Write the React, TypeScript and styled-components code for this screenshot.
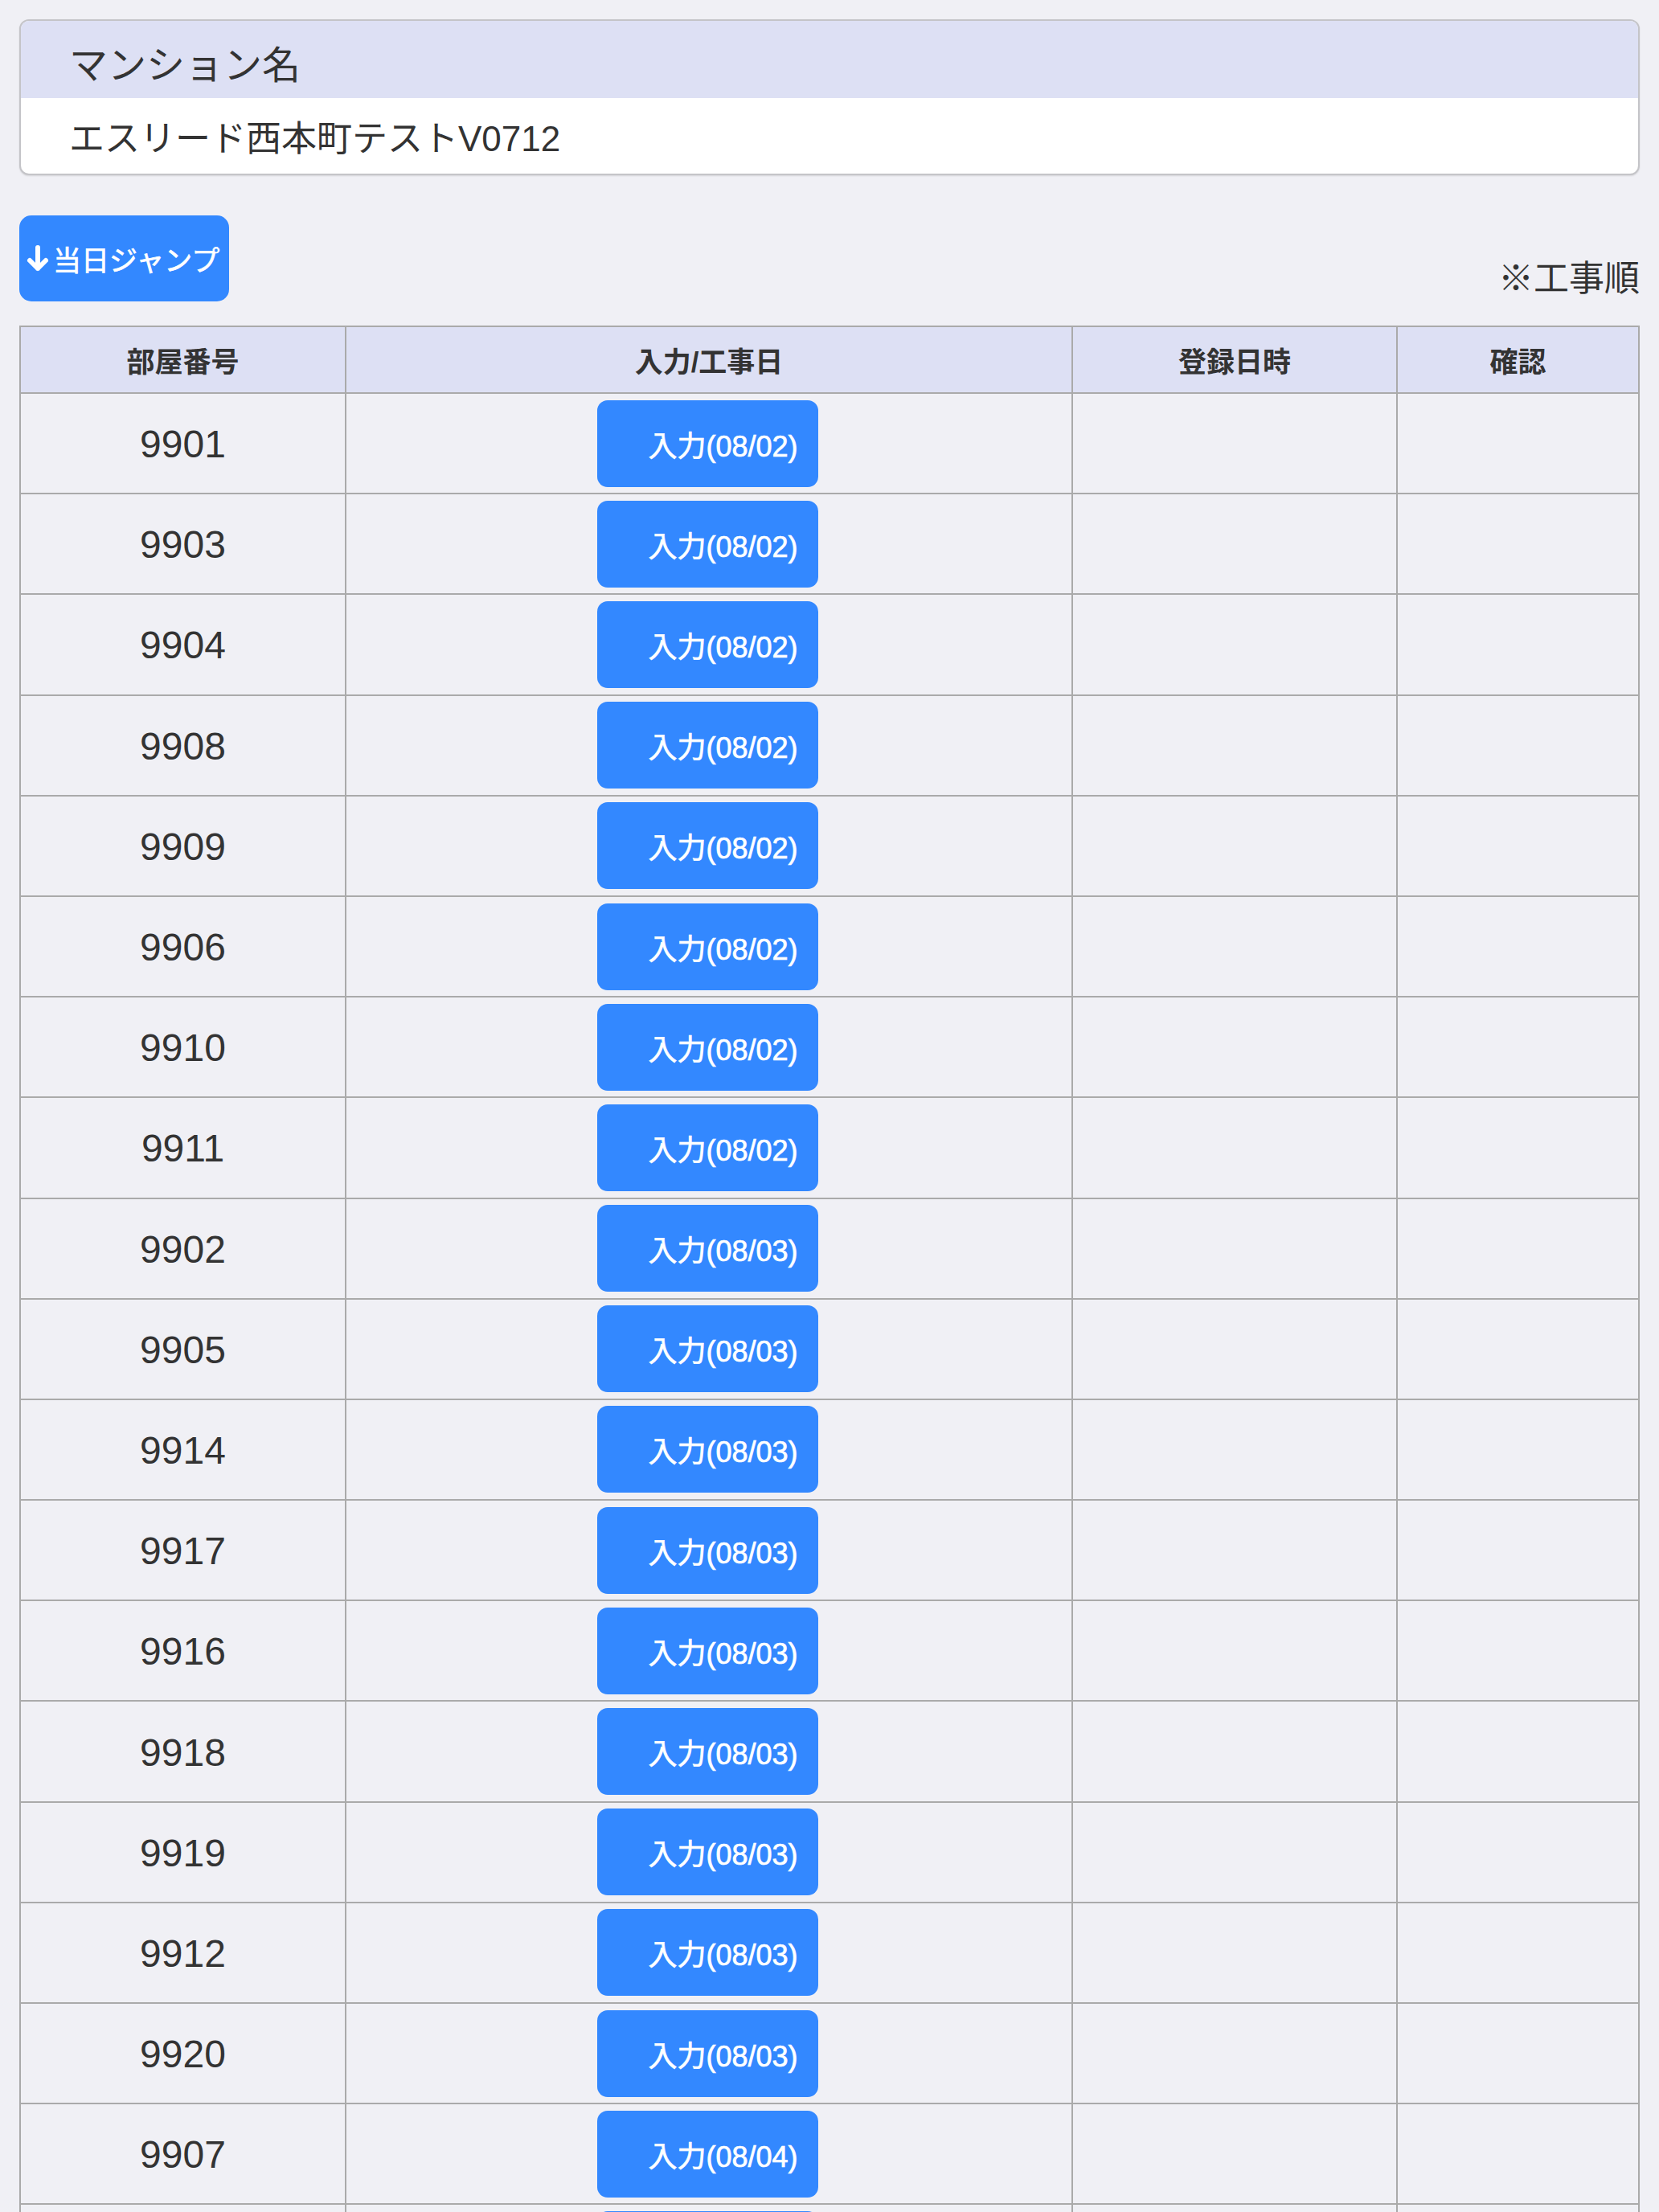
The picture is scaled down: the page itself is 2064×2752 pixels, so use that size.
import React from "react";
import styled, { createGlobalStyle } from "styled-components";

const GlobalStyle = createGlobalStyle`
  html, body {
    margin: 0;
    padding: 0;
    background: #f0f0f5;
  }
  body {
    font-family: "Liberation Sans", Arial, "Noto Sans CJK JP", sans-serif;
    color: #333333;
  }
  * { box-sizing: border-box; }
`;

const Page = styled.div`
  padding: 24px 24px 0 24px;
  display: flex;
  flex-direction: column;
`;

const InfoCard = styled.section`
  border: 2px solid #c4c4c8;
  border-radius: 12px;
  overflow: hidden;
  background: #ffffff;
  box-shadow: 0 1px 2px rgba(0, 0, 0, 0.12);
`;

const InfoHeader = styled.div`
  height: 96px;
  background: #dde0f4;
  display: flex;
  align-items: center;
  padding: 6px 0 0 60px;
  font-size: 48px;
  color: #333333;
`;

const InfoBody = styled.div`
  height: 94px;
  display: flex;
  align-items: center;
  padding: 0 0 0 60px;
  font-size: 44px;
  color: #333333;
`;

const Toolbar = styled.div`
  margin-top: 50px;
  display: flex;
  justify-content: space-between;
  align-items: flex-end;
`;

const JumpButton = styled.button`
  width: 261px;
  height: 107px;
  border: none;
  border-radius: 15px;
  background: #3388ff;
  color: #ffffff;
  font-family: "Liberation Sans", Arial, "Noto Sans CJK JP", sans-serif;
  font-size: 35px;
  -webkit-text-stroke: 0.7px #ffffff;
  display: flex;
  align-items: center;
  gap: 4px;
  padding: 0 0 0 8px;
  white-space: nowrap;
  cursor: pointer;
`;

const OrderNote = styled.div`
  font-size: 44px;
  line-height: 52px;
  color: #333333;
  margin-bottom: 2px;
`;

const Table = styled.div`
  margin-top: 30px;
  border: 2px solid #aaaaaa;
  border-bottom: none;
`;

const Row = styled.div<{ $head?: boolean }>`
  display: grid;
  grid-template-columns: 405px 904px 404px 1fr;
  height: ${(p) => (p.$head ? "83px" : "125.2px")};
  border-bottom: 2px solid #aaaaaa;
  background: ${(p) => (p.$head ? "#dde0f4" : "#f0f0f5")};
`;

const Cell = styled.div<{ $last?: boolean }>`
  display: flex;
  align-items: center;
  justify-content: center;
  border-right: ${(p) => (p.$last ? "none" : "2px solid #aaaaaa")};
`;

const HeadCell = styled(Cell)`
  font-size: 35px;
  font-weight: bold;
  color: #333333;
`;

const RoomCell = styled(Cell)`
  font-size: 48px;
  color: #333333;
  padding-top: 2px;
`;

const InputButton = styled.button`
  width: 275px;
  height: 108px;
  border: none;
  border-radius: 13px;
  background: #3388ff;
  color: #ffffff;
  font-family: "Liberation Sans", Arial, "Noto Sans CJK JP", sans-serif;
  font-size: 36px;
  -webkit-text-stroke: 0.7px #ffffff;
  display: flex;
  align-items: center;
  justify-content: flex-end;
  padding: 0 25px 0 0;
  white-space: nowrap;
  cursor: pointer;
  margin-right: 4px;
`;

const ArrowIcon = () => (
  <svg width="30" height="34" viewBox="0 0 30 34" aria-hidden="true">
    <path
      d="M15 3 V29 M5 19 L15 29 L25 19"
      fill="none"
      stroke="#ffffff"
      strokeWidth="6"
      strokeLinecap="round"
      strokeLinejoin="round"
    />
  </svg>
);

const rows: [string, string][] = [
  ["9901", "08/02"],
  ["9903", "08/02"],
  ["9904", "08/02"],
  ["9908", "08/02"],
  ["9909", "08/02"],
  ["9906", "08/02"],
  ["9910", "08/02"],
  ["9911", "08/02"],
  ["9902", "08/03"],
  ["9905", "08/03"],
  ["9914", "08/03"],
  ["9917", "08/03"],
  ["9916", "08/03"],
  ["9918", "08/03"],
  ["9919", "08/03"],
  ["9912", "08/03"],
  ["9920", "08/03"],
  ["9907", "08/04"],
  ["9913", "08/04"],
];

export default function App() {
  return (
    <>
      <GlobalStyle />
      <Page>
        <InfoCard>
          <InfoHeader>マンション名</InfoHeader>
          <InfoBody>エスリード西本町テストV0712</InfoBody>
        </InfoCard>
        <Toolbar>
          <JumpButton>
            <ArrowIcon />
            <span>当日ジャンプ</span>
          </JumpButton>
          <OrderNote>※工事順</OrderNote>
        </Toolbar>
        <Table>
          <Row $head>
            <HeadCell>部屋番号</HeadCell>
            <HeadCell>入力/工事日</HeadCell>
            <HeadCell>登録日時</HeadCell>
            <HeadCell $last>確認</HeadCell>
          </Row>
          {rows.map(([room, date]) => (
            <Row key={room}>
              <RoomCell>{room}</RoomCell>
              <Cell>
                <InputButton>入力({date})</InputButton>
              </Cell>
              <Cell />
              <Cell $last />
            </Row>
          ))}
        </Table>
      </Page>
    </>
  );
}
